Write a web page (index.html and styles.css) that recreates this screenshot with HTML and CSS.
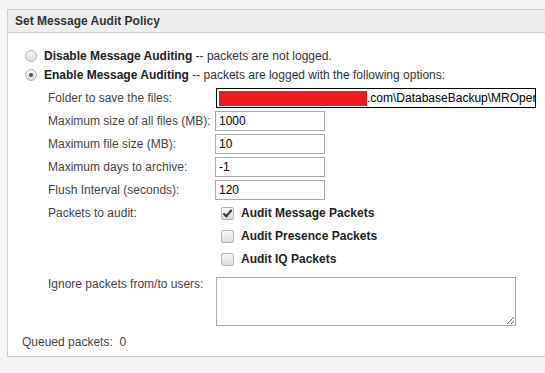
FILE: index.html
```html
<!DOCTYPE html>
<html lang="en">
<head>
    <meta charset="UTF-8">
    <title>Set Message Audit Policy</title>
    <link rel="stylesheet" href="styles.css">
</head>
<body>
    <div class="panel">
        <div class="panel-head">Set Message Audit Policy</div>

        <div class="panel-body">
            <div class="mode-row">
                <input type="radio" name="mode" id="mode-off" class="radio">
                <label for="mode-off"><b>Disable Message Auditing</b> -- packets are not logged.</label>
            </div>
            <div class="mode-row">
                <input type="radio" name="mode" id="mode-on" class="radio" checked>
                <label for="mode-on"><b>Enable Message Auditing</b> -- packets are logged with the following options:</label>
            </div>

            <div class="options">
                <label class="opt-label">Folder to save the files:</label>
                <div class="path-field"><span class="redact"></span>.com\DatabaseBackup\MROper</div>

                <label class="opt-label">Maximum size of all files (MB):</label>
                <input type="text" class="field" value="1000">

                <label class="opt-label">Maximum file size (MB):</label>
                <input type="text" class="field" value="10">

                <label class="opt-label">Maximum days to archive:</label>
                <input type="text" class="field" value="-1">

                <label class="opt-label">Flush Interval (seconds):</label>
                <input type="text" class="field" value="120">

                <label class="opt-label top">Packets to audit:</label>
                <div class="packet-list">
                    <div class="packet-row">
                        <input type="checkbox" id="p-msg" class="check" checked>
                        <label for="p-msg">Audit Message Packets</label>
                    </div>
                    <div class="packet-row">
                        <input type="checkbox" id="p-pres" class="check">
                        <label for="p-pres">Audit Presence Packets</label>
                    </div>
                    <div class="packet-row">
                        <input type="checkbox" id="p-iq" class="check">
                        <label for="p-iq">Audit IQ Packets</label>
                    </div>
                </div>

                <label class="opt-label ignore-label">Ignore packets from/to users:</label>
                <textarea class="users"></textarea>
            </div>

            <p class="queued">Queued packets:&nbsp; 0</p>
        </div>
    </div>
</body>
</html>
```

FILE: styles.css
```css
body {
    margin: 0;
    padding: 9px 0 0 7px;
    background: #f4f4f4;
    font-family: 'Liberation Sans', Arial, sans-serif;
    font-size: 12px;
    color: #333;
    overflow: hidden;
}

.panel {
    width: 560px;
    background: #fff;
    border: 1px solid #ccc;
}

.panel-head {
    height: 22px;
    line-height: 22px;
    padding-left: 7px;
    background: #eee;
    border-bottom: 1px solid #ccc;
    font-weight: bold;
}

.panel-body {
    padding: 13px 0 0 14px;
    height: 323px;
    box-sizing: border-box;
}

.mode-row {
    display: flex;
    align-items: center;
    height: 19px;
}

.mode-row label {
    margin-left: 7px;
}

.mode-row b {
    color: #222;
}

.radio {
    appearance: none;
    margin: 0 0 0 3px;
    width: 12px;
    height: 12px;
    border-radius: 50%;
    border: 1px solid #b4b4b4;
    background: linear-gradient(#f6f6f6, #dcdcdc);
    box-sizing: border-box;
    position: relative;
}

.radio:checked::after {
    content: "";
    position: absolute;
    left: 3px;
    top: 3px;
    width: 4px;
    height: 4px;
    border-radius: 50%;
    background: #555;
}

.options {
    display: grid;
    grid-template-columns: 167px auto;
    align-items: center;
    row-gap: 3px;
    margin: 4px 0 0 26px;
}

.opt-label {
    height: 20px;
    line-height: 20px;
    color: #444;
}

.opt-label.top {
    align-self: start;
}

.field,
.path-field {
    width: 110px;
    height: 20px;
    box-sizing: border-box;
    margin: 0;
    padding: 0 3px;
    border: 1px solid #a9a9a9;
    font-family: 'Liberation Sans', Arial, sans-serif;
    font-size: 12px;
    color: #000;
}

.path-field {
    width: 320px;
    margin-left: 1px;
    border: 1px solid #000;
    padding: 1px 2px;
    display: flex;
    align-items: center;
    white-space: nowrap;
    overflow: hidden;
}

.redact {
    width: 148px;
    height: 15px;
    background: #ed1c24;
    flex: none;
}

.packet-list {
    display: flex;
    flex-direction: column;
    gap: 3px;
}

.packet-row {
    display: flex;
    align-items: center;
    height: 20px;
    padding-left: 6px;
}

.packet-row label {
    margin-left: 7px;
    font-weight: bold;
    color: #222;
}

.check {
    appearance: none;
    margin: 0;
    width: 13px;
    height: 13px;
    border: 1px solid #b4b4b4;
    border-radius: 2px;
    background: linear-gradient(#f6f6f6, #dedede);
    box-sizing: border-box;
    position: relative;
}

.check:checked::after {
    content: "";
    position: absolute;
    left: 3px;
    top: 0px;
    width: 3px;
    height: 7px;
    border: solid #333;
    border-width: 0 2px 2px 0;
    transform: rotate(40deg);
}

.ignore-label {
    align-self: start;
    margin-top: 5px;
    line-height: 14px;
}

.users {
    width: 300px;
    height: 49px;
    box-sizing: border-box;
    margin: 5px 0 0 1px;
    border: 1px solid #a9a9a9;
    resize: both;
}

.queued {
    margin: 9px 0 0 0;
    color: #444;
}
```
